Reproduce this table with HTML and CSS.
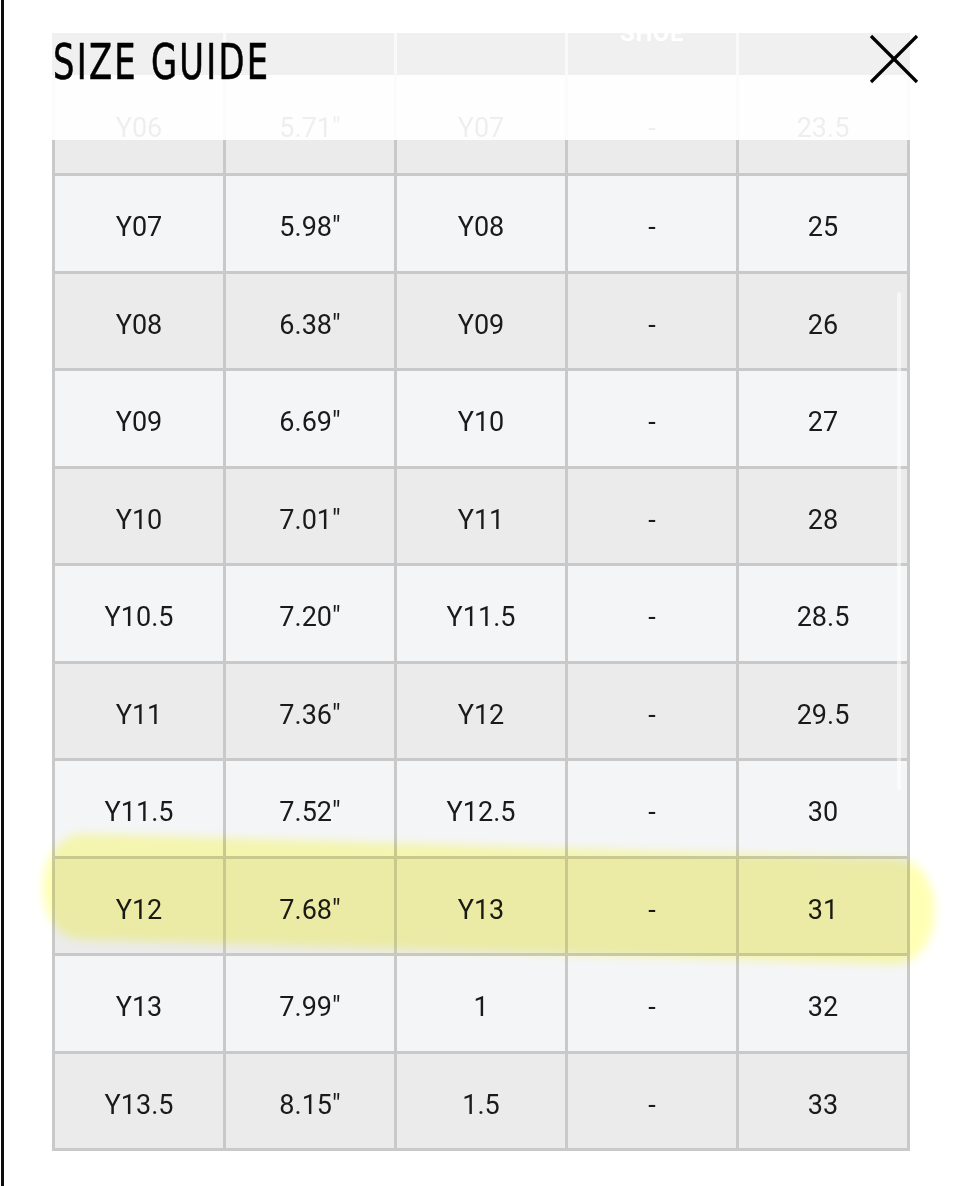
FILE: index.html
```html
<!DOCTYPE html>
<html lang="en">
<head>
<meta charset="utf-8">
<title>Size Guide</title>
<link rel="stylesheet" href="styles.css">
</head>
<body>
<div class="page">
  <div class="sheet">
    <div class="row head">
      <div class="cell"></div>
      <div class="cell"></div>
      <div class="cell"></div>
      <div class="cell"><span class="head-label">SHOE</span></div>
      <div class="cell"></div>
    </div>
    <div class="row grey first">
      <div class="cell">Y06</div><div class="cell">5.71"</div><div class="cell">Y07</div><div class="cell">-</div><div class="cell">23.5</div>
    </div>
    <div class="row light">
      <div class="cell">Y07</div><div class="cell">5.98"</div><div class="cell">Y08</div><div class="cell">-</div><div class="cell">25</div>
    </div>
    <div class="row grey">
      <div class="cell">Y08</div><div class="cell">6.38"</div><div class="cell">Y09</div><div class="cell">-</div><div class="cell">26</div>
    </div>
    <div class="row light">
      <div class="cell">Y09</div><div class="cell">6.69"</div><div class="cell">Y10</div><div class="cell">-</div><div class="cell">27</div>
    </div>
    <div class="row grey">
      <div class="cell">Y10</div><div class="cell">7.01"</div><div class="cell">Y11</div><div class="cell">-</div><div class="cell">28</div>
    </div>
    <div class="row light">
      <div class="cell">Y10.5</div><div class="cell">7.20"</div><div class="cell">Y11.5</div><div class="cell">-</div><div class="cell">28.5</div>
    </div>
    <div class="row grey">
      <div class="cell">Y11</div><div class="cell">7.36"</div><div class="cell">Y12</div><div class="cell">-</div><div class="cell">29.5</div>
    </div>
    <div class="row light">
      <div class="cell">Y11.5</div><div class="cell">7.52"</div><div class="cell">Y12.5</div><div class="cell">-</div><div class="cell">30</div>
    </div>
    <div class="row grey">
      <div class="cell">Y12</div><div class="cell">7.68"</div><div class="cell">Y13</div><div class="cell">-</div><div class="cell">31</div>
    </div>
    <div class="row light">
      <div class="cell">Y13</div><div class="cell">7.99"</div><div class="cell">1</div><div class="cell">-</div><div class="cell">32</div>
    </div>
    <div class="row grey">
      <div class="cell">Y13.5</div><div class="cell">8.15"</div><div class="cell">1.5</div><div class="cell">-</div><div class="cell">33</div>
    </div>
  </div>

  <div class="fade"></div>
  <div class="scrollbar"></div>
  <div class="highlight"></div>

  <div class="topbar">
    <h1 class="title">SIZE GUIDE</h1>
    <button class="close" aria-label="Close">
      <svg width="50" height="50" viewBox="0 0 50 50">
        <line x1="2" y1="2" x2="48" y2="48" stroke="#000" stroke-width="3.2"/>
        <line x1="48" y1="2" x2="2" y2="48" stroke="#000" stroke-width="3.2"/>
      </svg>
    </button>
  </div>
</div>
</body>
</html>
```

FILE: styles.css
```css
html, body {
  margin: 0;
  padding: 0;
  background: #ffffff;
}

body {
  overflow: hidden;
}

.page {
  position: relative;
  box-sizing: border-box;
  height: 1186px;
  margin-left: 1px;
  border-left: 3px solid #0c0c0c;
  padding-top: 33px;
  background: #ffffff;
  font-family: Roboto, "Liberation Sans", sans-serif;
  color: #1a1a1a;
}

.sheet {
  margin-left: 48px;
  width: 858px;
}

.row {
  display: grid;
  grid-template-columns: repeat(5, 1fr);
  box-sizing: border-box;
  height: 97.5px;
  border-left: 3px solid #c9c9c9;
}

.cell {
  box-sizing: border-box;
  display: flex;
  align-items: center;
  justify-content: center;
  padding-top: 9px;
  border-right: 3px solid #c9c9c9;
  border-bottom: 3px solid #c9c9c9;
  font-size: 27px;
  line-height: 1;
}

.row.light .cell {
  background: #f4f5f7;
}

.row.grey .cell {
  background: #ebebeb;
}

.row.first {
  height: 101px;
}

.row.head {
  height: 42px;
  overflow: hidden;
  border-left-color: #f0f0f0;
}

.row.head .cell {
  background: #f0f0f0;
  border-bottom: none;
  border-right-color: #fafafa;
  align-items: flex-start;
  padding-top: 0;
}

.row.head .cell:last-child {
  border-right-color: #f0f0f0;
}

.head-label {
  margin-top: -12px;
  font-size: 24px;
  font-weight: 700;
  color: #ffffff;
  letter-spacing: 0.5px;
}

.fade {
  position: absolute;
  left: 48px;
  top: 75px;
  width: 858px;
  height: 65px;
  background: rgba(255, 255, 255, 0.93);
}

.scrollbar {
  position: absolute;
  left: 893px;
  top: 292px;
  width: 4px;
  height: 498px;
  border-radius: 2px;
  background: rgba(255, 255, 255, 0.55);
}

.highlight {
  position: absolute;
  left: 39px;
  top: 846px;
  width: 892px;
  height: 106px;
  border-radius: 40px / 50px;
  background: #ffffb4;
  mix-blend-mode: multiply;
  transform: rotate(1.75deg);
  filter: blur(5px);
}

.topbar {
  position: absolute;
  left: 46px;
  top: 34px;
  width: 869px;
  display: flex;
  justify-content: space-between;
  align-items: flex-start;
}

.title {
  margin: 4px 0 0 3px;
  font-family: "DejaVu Sans Condensed", "Liberation Sans Narrow", "Liberation Sans", sans-serif;
  font-stretch: condensed;
  font-weight: 400;
  font-size: 49px;
  line-height: 1;
  letter-spacing: 3px;
  color: #000000;
  -webkit-text-stroke: 0.6px #000000;
  transform: scaleX(0.765);
  transform-origin: left center;
}

.close {
  margin: 0;
  padding: 0;
  border: none;
  background: transparent;
  width: 50px;
  height: 50px;
  display: block;
}

.close svg {
  display: block;
}
```
